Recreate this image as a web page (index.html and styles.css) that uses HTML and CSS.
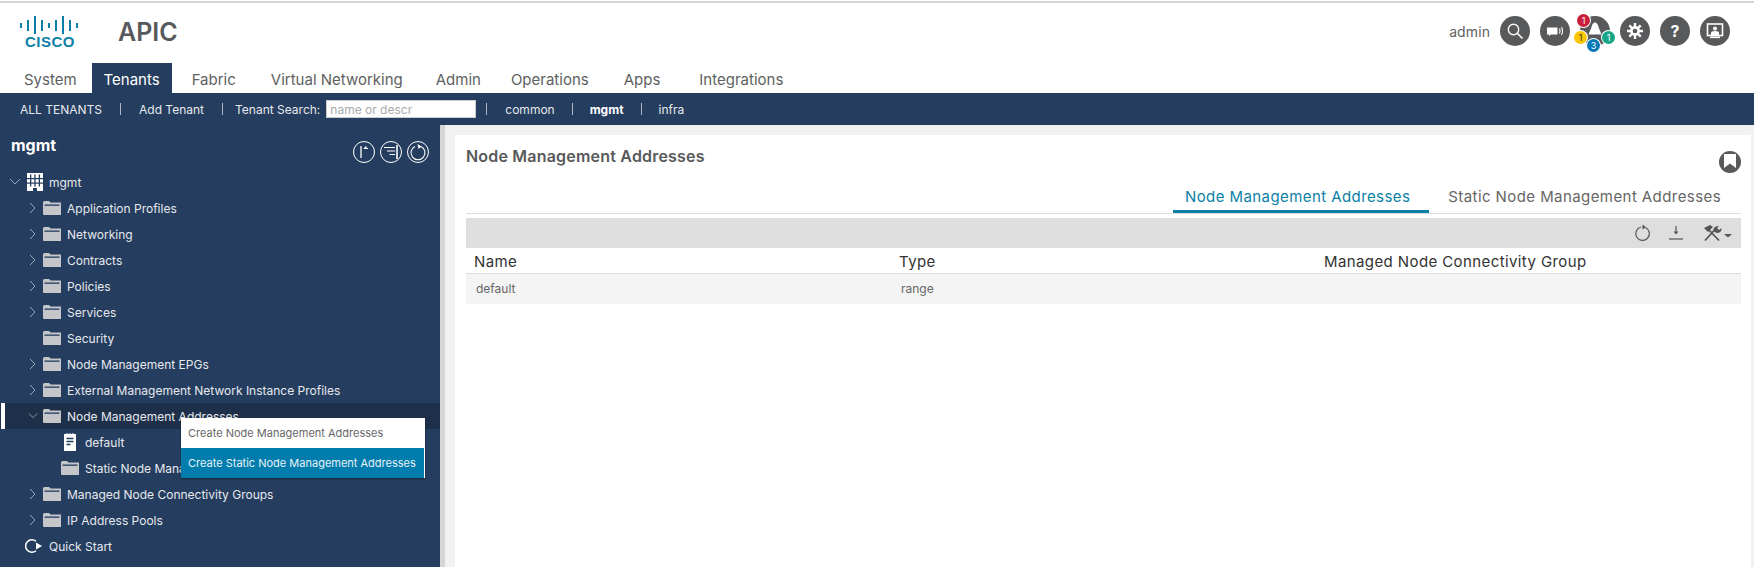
FILE: index.html
```html
<!DOCTYPE html>
<html lang="en">
<head>
<meta charset="utf-8">
<title>APIC</title>
<link rel="stylesheet" href="styles.css">
</head>
<body>
<svg class="defs" width="0" height="0">
  <symbol id="folder" viewBox="0 0 18 14">
    <path d="M0 1.500Q0 0 1.500 0H6L7.500 1.500H18V14H1Q0 14 0 13Z" fill="#c4c6ca"/>
    <rect x="1.500" y="3.500" width="15" height="1.300" fill="#253d5e"/>
  </symbol>
  <symbol id="chev-r" viewBox="0 0 10 12"><path d="M2 1l5 5-5 5" fill="none" stroke="#9aa5b5" stroke-width="1"/></symbol>
  <symbol id="chev-d" viewBox="0 0 12 10"><path d="M1 2l5 5 5-5" fill="none" stroke="#9aa5b5" stroke-width="1"/></symbol>
</svg>
<header class="brand">
  <div class="logo">
    <svg class="logo-bars" width="60" height="20" viewBox="0 0 60 20">
      <g fill="#0a7fa8">
        <rect x="0" y="8" width="2" height="5"/><rect x="7" y="5" width="2" height="11"/><rect x="14" y="1" width="2" height="18"/>
        <rect x="21" y="5" width="2" height="11"/><rect x="28" y="8" width="2" height="5"/><rect x="35" y="5" width="2" height="11"/>
        <rect x="42" y="1" width="2" height="18"/><rect x="49" y="5" width="2" height="11"/><rect x="56" y="8" width="2" height="5"/>
      </g>
    </svg>
    <span class="logo-text">CISCO</span>
  </div>
  <div class="app-name">APIC</div>
  <div class="user-tools">
    <span class="user-name">admin</span>
    <span class="round-btn"><svg width="20" height="20" viewBox="0 0 20 20"><circle cx="8.500" cy="8.500" r="5.200" fill="none" stroke="#fff" stroke-width="1.400"/><path d="M12.500 12.500l5 5" stroke="#fff" stroke-width="1.600"/></svg></span>
    <span class="round-btn"><svg width="20" height="20" viewBox="0 0 20 20"><path d="M2 6.500h10.500v7H6l-2 1.500v-1.500H2z" fill="#fff"/><path d="M14.500 7.500q1.200 2.500 0 5M16.500 6q2 4 0 8" fill="none" stroke="#fff" stroke-width="1.100"/></svg></span>
    <span class="round-btn bell-btn">
      <svg width="20" height="20" viewBox="0 0 20 20"><path d="M10 1.500q2.500 0 3.500 4.500l3 7.500h-13l3-7.500q1-4.500 3.500-4.500z" fill="#fff"/></svg>
      <span class="badge badge-red">1</span>
      <span class="badge badge-yellow">1</span>
      <span class="badge badge-blue">3</span>
      <span class="badge badge-green">1</span>
    </span>
    <span class="round-btn"><svg width="20" height="20" viewBox="0 0 20 20"><g stroke="#fff" stroke-width="2.400"><path d="M10 2v16M2 10h16M4.300 4.300l11.400 11.400M15.700 4.300L4.300 15.700"/></g><circle cx="10" cy="10" r="5" fill="#fff"/><circle cx="10" cy="10" r="2.300" fill="#58595b"/></svg></span>
    <span class="round-btn help">?</span>
    <span class="round-btn"><svg width="20" height="20" viewBox="0 0 20 20"><rect x="2.500" y="3" width="15" height="11.500" fill="none" stroke="#fff" stroke-width="1.600"/><circle cx="10" cy="7.500" r="2" fill="#fff"/><path d="M6 14v-2q0-2 4-2t4 2v2z" fill="#fff"/><rect x="5" y="15.500" width="10" height="1.600" fill="#fff"/></svg></span>
  </div>
</header>
<nav class="main-nav">
  <a class="nav-item">System</a>
  <a class="nav-item active">Tenants</a>
  <a class="nav-item">Fabric</a>
  <a class="nav-item">Virtual Networking</a>
  <a class="nav-item">Admin</a>
  <a class="nav-item">Operations</a>
  <a class="nav-item">Apps</a>
  <a class="nav-item">Integrations</a>
</nav>
<nav class="sub-nav">
  <span class="sub-item">ALL TENANTS</span><span class="sep"></span>
  <span class="sub-item">Add Tenant</span><span class="sep sep-tight"></span>
  <span class="sub-item search-label">Tenant Search:</span>
  <input class="search-input" placeholder="name or descr">
  <span class="sep"></span>
  <span class="sub-item">common</span><span class="sep sep-narrow"></span>
  <span class="sub-item strong">mgmt</span><span class="sep sep-narrow"></span>
  <span class="sub-item">infra</span>
</nav>
<div class="workspace">
  <aside class="side">
    <div class="side-head">
      <span class="side-title">mgmt</span>
      <div class="side-tools">
        <span class="ring"><svg width="22" height="22" viewBox="0 0 22 22"><path d="M8 5v12" stroke="#fff" stroke-width="1.300"/><path d="M11 7.500h4M13 5.500l-2 2 2 0z" stroke="#fff" stroke-width="1" fill="#fff"/></svg></span>
        <span class="ring"><svg width="22" height="22" viewBox="0 0 22 22"><path d="M4 6.500h11M7 10h8M9.500 13.500h5.500" stroke="#fff" stroke-width="1.200"/><path d="M17 4v14" stroke="#fff" stroke-width="1.600"/></svg></span>
        <span class="ring"><svg width="22" height="22" viewBox="0 0 22 22"><path d="M14 5.400A7 7 0 1 1 8 5.400" fill="none" stroke="#fff" stroke-width="1.100"/><path d="M10.500 3l4 2.400-3 2.600z" fill="#fff"/></svg></span>
      </div>
    </div>
    <ul class="tree">
      <li class="row d0"><svg class="chev" width="12" height="10"><use href="#chev-d"/></svg>
        <svg class="bldg" width="16" height="18" viewBox="0 0 16 18"><path d="M0 0h16v18H10v-3H6v3H0z" fill="#fff"/><g fill="#253d5e"><rect x="3" y="1.500" width="1.300" height="12"/><rect x="7.300" y="1.500" width="1.300" height="12"/><rect x="11.700" y="1.500" width="1.300" height="12"/><rect x="0" y="5" width="16" height="1.200"/><rect x="0" y="9.500" width="16" height="1.200"/></g></svg>
        <span>mgmt</span></li>
      <li class="row d1"><svg class="chev" width="10" height="12"><use href="#chev-r"/></svg><svg class="folder" width="18" height="14"><use href="#folder"/></svg><span>Application Profiles</span></li>
      <li class="row d1"><svg class="chev" width="10" height="12"><use href="#chev-r"/></svg><svg class="folder" width="18" height="14"><use href="#folder"/></svg><span>Networking</span></li>
      <li class="row d1"><svg class="chev" width="10" height="12"><use href="#chev-r"/></svg><svg class="folder" width="18" height="14"><use href="#folder"/></svg><span>Contracts</span></li>
      <li class="row d1"><svg class="chev" width="10" height="12"><use href="#chev-r"/></svg><svg class="folder" width="18" height="14"><use href="#folder"/></svg><span>Policies</span></li>
      <li class="row d1"><svg class="chev" width="10" height="12"><use href="#chev-r"/></svg><svg class="folder" width="18" height="14"><use href="#folder"/></svg><span>Services</span></li>
      <li class="row d1 leaf"><svg class="folder" width="18" height="14"><use href="#folder"/></svg><span>Security</span></li>
      <li class="row d1"><svg class="chev" width="10" height="12"><use href="#chev-r"/></svg><svg class="folder" width="18" height="14"><use href="#folder"/></svg><span>Node Management EPGs</span></li>
      <li class="row d1"><svg class="chev" width="10" height="12"><use href="#chev-r"/></svg><svg class="folder" width="18" height="14"><use href="#folder"/></svg><span>External Management Network Instance Profiles</span></li>
      <li class="row d1 selected"><svg class="chev" width="10" height="12" viewBox="0 0 12 10"><use href="#chev-d"/></svg><svg class="folder" width="18" height="14"><use href="#folder"/></svg><span>Node Management Addresses</span></li>
      <li class="row d2 doc-row"><svg class="doc" width="12" height="18" viewBox="0 0 12 18"><path d="M0 1h2l1-1 1 1h1l1-1 1 1h1l1-1 1 1h2v17H0z" fill="#fff"/><path d="M2.500 5.500h7M2.500 8.500h7M2.500 11.500h4" stroke="#253d5e" stroke-width="1.300"/></svg><span>default</span></li>
      <li class="row d2"><svg class="folder" width="18" height="14"><use href="#folder"/></svg><span>Static Node Management Addresses</span></li>
      <li class="row d1"><svg class="chev" width="10" height="12"><use href="#chev-r"/></svg><svg class="folder" width="18" height="14"><use href="#folder"/></svg><span>Managed Node Connectivity Groups</span></li>
      <li class="row d1"><svg class="chev" width="10" height="12"><use href="#chev-r"/></svg><svg class="folder" width="18" height="14"><use href="#folder"/></svg><span>IP Address Pools</span></li>
      <li class="row d0 quick"><svg class="qs" width="18" height="16" viewBox="0 0 18 16"><path d="M11 3.200A6.300 6.300 0 1 0 11 12.800" fill="none" stroke="#fff" stroke-width="1.500"/><path d="M11 4.500l6 3.500-6 3.500z" fill="#fff"/></svg><span>Quick Start</span></li>
    </ul>
    <div class="ctx-menu">
      <div class="ctx-item">Create Node Management Addresses</div>
      <div class="ctx-item hot">Create Static Node Management Addresses</div>
    </div>
  </aside>
  <div class="splitter"></div>
  <main class="content">
    <section class="card">
      <div class="card-head">
        <h1 class="card-title">Node Management Addresses</h1>
        <span class="bookmark"><svg width="12" height="14" viewBox="0 0 12 14"><path d="M0 0h12v14L6 9.500 0 14z" fill="#fff"/></svg></span>
      </div>
      <div class="tabs">
        <span class="tab current">Node Management Addresses</span>
        <span class="tab">Static Node Management Addresses</span>
      </div>
      <div class="toolbar">
        <svg width="18" height="18" viewBox="0 0 18 18"><path d="M11.500 3.500A6.800 6.800 0 1 1 7 3" fill="none" stroke="#555" stroke-width="1.200"/><path d="M8.500 0.500l3.500 2.700-3.500 2.300z" fill="#555"/></svg>
        <svg width="18" height="18" viewBox="0 0 18 18"><path d="M9 2v7" stroke="#555" stroke-width="1.200"/><path d="M6.500 7.500L9 10.500l2.500-3z" fill="#555"/><path d="M2 15h14" stroke="#555" stroke-width="1.200"/></svg>
        <svg class="tool-last" width="30" height="18" viewBox="0 0 30 18"><path d="M3 16.500L13 5.500M17 16.500L7 6" stroke="#555" stroke-width="1.800" fill="none"/><path d="M2 4l6-3 3 2-5 5z" fill="#555"/><path d="M11.500 7q-.5-5 5.500-5l-2 2 2 2 2.500-2q.5 5-5 5z" fill="#555"/><path d="M22 10h8l-4 3.500z" fill="#555"/></svg>
      </div>
      <table class="grid">
        <thead><tr><th>Name</th><th>Type</th><th>Managed Node Connectivity Group</th></tr></thead>
        <tbody><tr><td>default</td><td>range</td><td></td></tr></tbody>
      </table>
    </section>
  </main>
</div>
</body>
</html>
```
FILE: styles.css
```css
* { box-sizing: border-box; }
html, body { margin: 0; padding: 0; height: 567px; overflow: hidden; }
body { font-family: Inter, "Liberation Sans", sans-serif; background: #fff; color: #58595b; border-top: 2px solid #d4d4d4; margin-top: 1px; display: flex; flex-direction: column; height: 566px; }
.defs { position: absolute; }

.brand { height: 60px; display: flex; align-items: center; flex: none; }
.logo { width: 60px; margin-left: 20px; margin-top: -4px; display: flex; flex-direction: column; align-items: center; }
.logo-bars { display: block; margin-top: 1px; }
.logo-text { font: bold 15px/14px "Liberation Sans", sans-serif; letter-spacing: .5px; color: #0a7fa8; margin-top: 0; }
.app-name { font-size: 25px; font-weight: 600; margin-left: 38px; margin-top: -3px; color: #58595b; }
.user-tools { margin-left: auto; margin-right: 24px; display: flex; align-items: center; gap: 10px; margin-top: -4px; }
.user-name { font-size: 14px; color: #5f5f5f; letter-spacing: .1px; }
.round-btn { width: 30px; height: 30px; border-radius: 50%; background: #58595b; display: flex; align-items: center; justify-content: center; position: relative; }
.help { color: #fff; font-weight: 700; font-size: 16px; }
.badge { position: absolute; width: 13px; height: 13px; border-radius: 50%; font-size: 9px; line-height: 13px; text-align: center; box-shadow: 0 0 0 1px #fff; color: #fff; }
.badge-red { background: #c8203c; left: -3px; top: -2px; }
.badge-yellow { background: #fbc800; color: #333; left: -6px; top: 15px; }
.badge-blue { background: #0579b8; left: 7px; top: 23px; }
.badge-green { background: #17a58a; left: 22px; top: 15px; }

.main-nav { height: 30px; display: flex; flex: none; padding-left: 9px; font-size: 15px; color: #5e5f61; }
.nav-item { display: flex; align-items: center; padding: 3px 15px 0; }
.nav-item:nth-child(2) { padding: 3px 13px 0; margin-right: 5px; width: 80px; justify-content: center; }
.nav-item:nth-child(3) { margin-right: 5px; }
.nav-item:nth-child(4) { margin-right: 3px; }
.nav-item:nth-child(6) { margin-right: 5px; }
.nav-item:nth-child(7) { margin-right: 9px; }
.nav-item.active { background: #253d5e; color: #fff; }

.sub-nav { height: 32px; background: #253d5e; color: #e6e9ee; display: flex; align-items: center; flex: none; font-size: 12px; padding-left: 20px; }
.sep { width: 1px; height: 12px; background: #aeb7c4; margin: 0 18px; }
.sep-tight { margin-right: 12px; }
.sep-narrow { margin: 0 17px; }
.sub-item.strong { font-weight: 700; color: #fff; }
.search-label { margin-right: 6px; }
.search-input { width: 150px; height: 18px; border: 1px solid #ccc; padding: 0 3px; font: 12px Inter, sans-serif; background: #fff; margin-right: -8px; }
.search-input::placeholder { color: #aaa; }

.workspace { flex: 1; display: flex; min-height: 0; }
.side { width: 440px; background: #253d5e; position: relative; flex: none; color: #e6e9ee; }
.side-head { height: 44px; display: flex; align-items: flex-start; justify-content: space-between; padding: 10px 11px 0 11px; }
.side-title { font-size: 16px; font-weight: 700; color: #fff; line-height: 20px; }
.side-tools { display: flex; gap: 5px; margin-top: 6px; }
.ring { width: 22px; height: 22px; border: 1px solid #fff; border-radius: 50%; display: block; position: relative; }
.ring svg { position: absolute; left: -1px; top: -1px; }
.tree { list-style: none; margin: 0; padding: 0; font-size: 12px; }
.row { height: 26px; display: flex; align-items: center; white-space: nowrap; }
.d0 { padding-left: 9px; }
.d1 { padding-left: 28px; }
.d2 { padding-left: 61px; }
.chev { flex: none; margin-right: 5px; }
.d0 .chev { margin-right: 6px; }
.d0 span { margin-left: 6px; }
.folder { flex: none; margin-right: 6px; margin-top: -1px; }
.leaf { padding-left: 43px; }
.bldg { flex: none; }
.doc { flex: none; margin-left: 3px; margin-right: 9px; }
.quick { padding-left: 25px; }
.quick span { margin-left: 6px; }
.selected { background: #1e3049; position: relative; padding-left: 28px; }
.selected::before { content: ""; position: absolute; left: 1px; top: 0; bottom: 0; width: 4px; background: #fff; }
.ctx-menu { position: absolute; left: 181px; top: 293px; width: 244px; background: #fff; font-size: 11px; box-shadow: 0 1px 2px rgba(0,0,0,.35); color: #666; }
.ctx-item { height: 30px; display: flex; align-items: center; padding-left: 7px; white-space: nowrap; }
.ctx-item.hot { background: #007cad; color: #e8f2f7; margin-right: 1px; }

.splitter { width: 5px; background: #d5d5d3; flex: none; }
.content { flex: 1; background: #f1f1f1; padding: 10px 3px 0 10px; min-width: 0; }
.card { background: #fff; height: 100%; padding: 0 10px 0 11px; }
.card-head { height: 53px; display: flex; justify-content: space-between; padding-top: 11px; }
.card-title { margin: 0; font-size: 16px; font-weight: 600; line-height: 20px; color: #58595b; letter-spacing: .2px; }
.bookmark { width: 22px; height: 22px; border-radius: 50%; background: #58595b; margin: 5px 0 0; display: flex; justify-content: center; padding-top: 3px; }
.tabs { height: 26px; border-bottom: 1px solid #ddd; display: flex; justify-content: flex-end; font-size: 15px; letter-spacing: .42px; padding-right: 20px; }
.tab { height: 25px; line-height: 17px; color: #666; white-space: nowrap; margin-left: 19px; }
.tab.current { color: #0a7fa8; border-bottom: 3px solid #0a7fa8; padding: 0 19px 0 12px; }
.toolbar { height: 30px; margin-top: 4px; background: #dedede; display: flex; align-items: center; justify-content: flex-end; gap: 15px; padding-right: 9px; }
.tool-last { margin-left: 2px; }
.grid { width: 100%; border-collapse: collapse; table-layout: fixed; }
.grid th { font-weight: 400; text-align: left; font-size: 15px; height: 25px; padding: 2px 0 0 8px; border-bottom: 1px solid #ddd; color: #333; letter-spacing: .4px; }
.grid td { font-size: 12px; height: 31px; padding: 0 0 0 10px; background: #f4f4f4; color: #666; }
```
